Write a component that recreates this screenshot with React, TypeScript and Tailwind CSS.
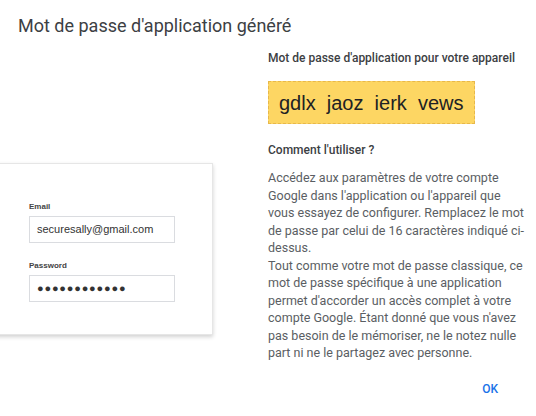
import React from "react";

const lines = [
  "Accédez aux paramètres de votre compte",
  "Google dans l'application ou l'appareil que",
  "vous essayez de configurer. Remplacez le mot",
  "de passe par celui de 16 caractères indiqué ci-",
  "dessus.",
  "Tout comme votre mot de passe classique, ce",
  "mot de passe spécifique à une application",
  "permet d'accorder un accès complet à votre",
  "compte Google. Étant donné que vous n'avez",
  "pas besoin de le mémoriser, ne le notez nulle",
  "part ni ne le partagez avec personne.",
];

function LoginCard() {
  return (
    <div className="-ml-[20px] mt-[125px] w-[233px] h-[172px] bg-white border border-[#e6e6e6] shadow-[0_2px_4px_rgba(0,0,0,0.18)] pl-[48px] pt-[38px] font-['Liberation_Sans',Arial,sans-serif]">
      <div className="text-[8px] font-bold text-[#444] leading-[10px]">Email</div>
      <div className="mt-[4px] w-[146px] h-[27px] border border-[#dadce0] flex items-center pl-[7px] text-[11px] text-[#333]">
        securesally@gmail.com
      </div>
      <div className="mt-[18px] text-[8px] font-bold text-[#444] leading-[10px]">Password</div>
      <div className="mt-[4px] w-[146px] h-[27px] border border-[#dadce0] flex items-center pl-[7px] text-[11px] tracking-[0.8px] text-[#333]">
        ●●●●●●●●●●●●
      </div>
    </div>
  );
}

export default function App() {
  return (
    <div className="w-[536px] h-[416px] bg-white overflow-hidden font-['Roboto',sans-serif] flex flex-col">
      <h1 className="pt-[14px] pl-[18px] text-[18px] leading-[24px] text-[#3c4043]">
        Mot de passe d'application généré
      </h1>
      <div className="flex">
        <div className="w-[268px]">
          <LoginCard />
        </div>
        <div className="w-[256px] pt-[12px]">
          <p className="text-[12px] leading-[16px] font-medium text-[#3c4043]">
            Mot de passe d'application pour votre appareil
          </p>
          <div className="mt-[15px] w-[207px] h-[43px] bg-[#fdd663] border border-dashed border-[#e8b84a] flex items-center pl-[10px] font-['Liberation_Sans',Arial,sans-serif] text-[20px] text-[#202124] whitespace-pre">
            gdlx  jaoz  ierk  vews
          </div>
          <p className="mt-[18px] text-[12px] leading-[16px] font-medium text-[#3c4043]">Comment l'utiliser ?</p>
          <div className="mt-[11px] text-[12.5px] leading-[17.5px] text-[#5a5e63] whitespace-nowrap">
            {lines.map((l, i) => (
              <div key={i}>{l}</div>
            ))}
          </div>
        </div>
      </div>
      <div className="flex justify-end pr-[38px] mt-[18px]">
        <button className="text-[12px] font-medium text-[#1a73e8]">OK</button>
      </div>
    </div>
  );
}
